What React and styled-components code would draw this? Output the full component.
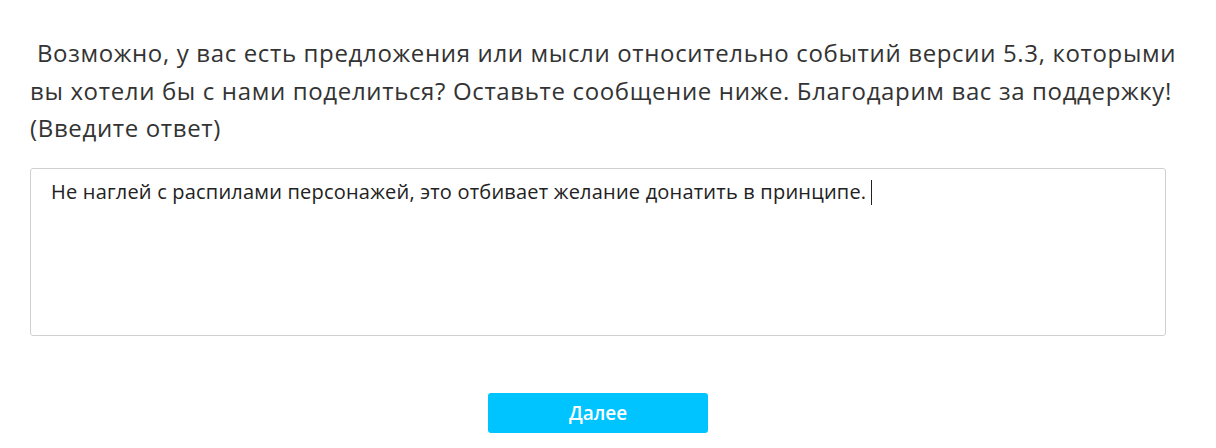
import styled, { createGlobalStyle } from "styled-components";

const Global = createGlobalStyle`
  body {
    margin: 0;
    background: #fff;
    font-family: "Open Sans", "Noto Sans", sans-serif;
  }
`

const Page = styled.div`
  display: flex;
  flex-direction: column;
  padding: 34px 50px 0 30px;
`
const Question = styled.p`
  margin: 0;
  font-size: 24px;
  line-height: 37.5px;
  color: #333;
  white-space: nowrap;
  letter-spacing: 0.65px;
`
const AnswerBox = styled.div`
  margin-top: 21px;
  height: 168px;
  border: 1px solid #d0d0d0;
  border-radius: 3px;
  padding: 8px 20px;
  font-size: 20px;
  line-height: 30px;
  color: #222;
  letter-spacing: 0.2px;
  box-sizing: border-box;
`
const Caret = styled.span`
  display: inline-block;
  width: 1px;
  height: 25px;
  background: #222;
  vertical-align: -6px;
  margin-left: 5px;
`
const Footer = styled.div`
  display: flex;
  justify-content: center;
  padding-top: 57px;
`
const Button = styled.button`
  width: 220px;
  height: 40px;
  border: none;
  border-radius: 3px;
  background: #00c4ff;
  color: #fff;
  font-family: "Open Sans", "Noto Sans", sans-serif;
  font-size: 19px;
  font-weight: 600;
  cursor: pointer;
`

const App = () => {
  return (
    <>
      <Global />
      <Page>
        <Question>
          &nbsp;Возможно, у вас есть предложения или мысли относительно событий версии 5.3, которыми
          <br />
          вы хотели бы с нами поделиться? Оставьте сообщение ниже. Благодарим вас за поддержку!
          <br />
          (Введите ответ)
        </Question>
        <AnswerBox>
          Не наглей с распилами персонажей, это отбивает желание донатить в принципе.
          <Caret />
        </AnswerBox>
        <Footer>
          <Button>Далее</Button>
        </Footer>
      </Page>
    </>
  )
}
export default App;
